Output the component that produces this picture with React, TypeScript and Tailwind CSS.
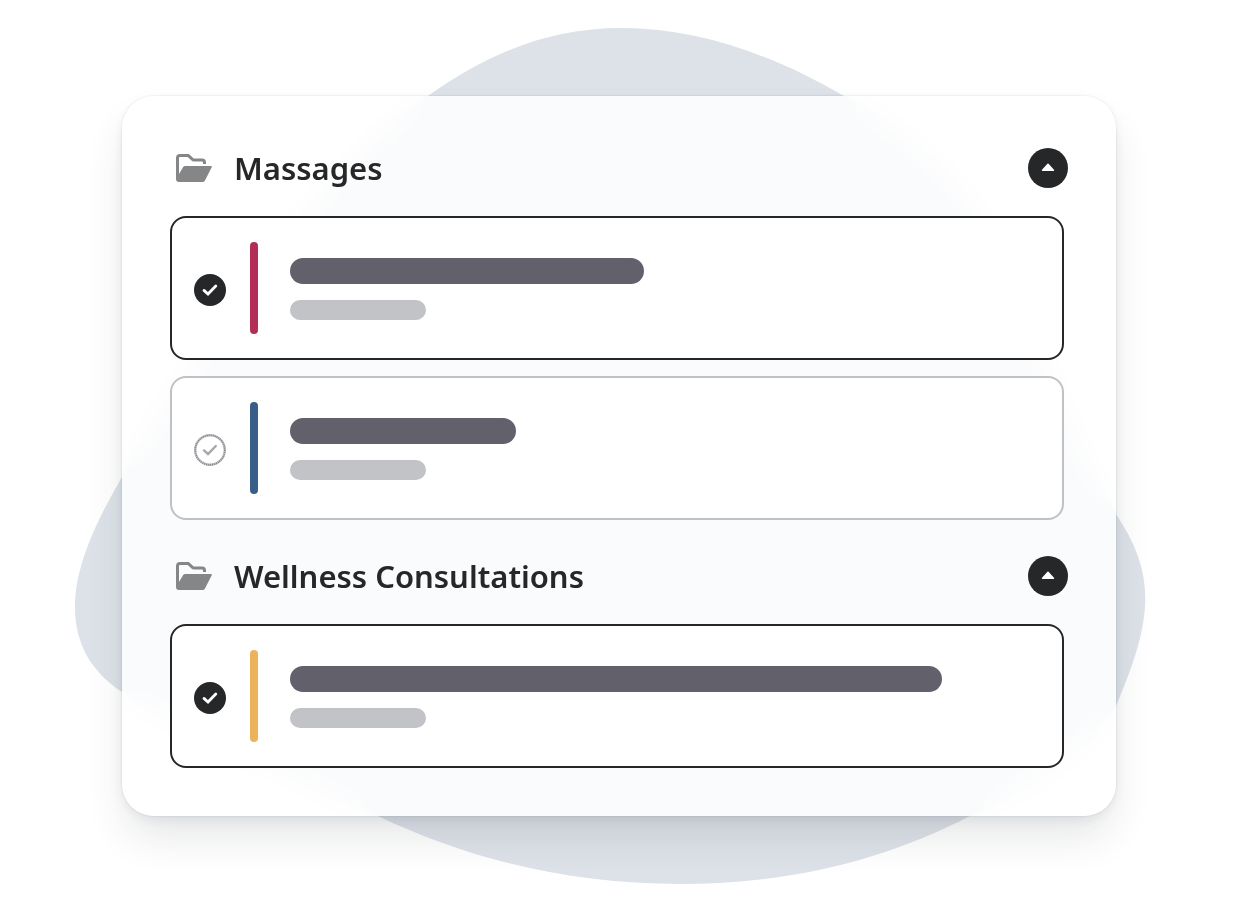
import { useState } from 'react';
import clsx from 'clsx';

interface Service {
  id: string;
  accent: string;
  titleWidth: string;
  selected: boolean;
}

interface Category {
  name: string;
  services: Service[];
}

const categories: Category[] = [
  {
    name: 'Massages',
    services: [
      { id: 'massage-1', accent: 'bg-[#b32e54]', titleWidth: 'w-[354px]', selected: true },
      { id: 'massage-2', accent: 'bg-[#385f89]', titleWidth: 'w-[226px]', selected: false },
    ],
  },
  {
    name: 'Wellness Consultations',
    services: [
      { id: 'wellness-1', accent: 'bg-[#ecb35a]', titleWidth: 'w-[652px]', selected: true },
    ],
  },
];

function Blob() {
  return (
    <svg
      className="absolute inset-0 w-full h-full"
      viewBox="0 0 1240 914"
      preserveAspectRatio="none"
      aria-hidden="true"
    >
      <path
        fill="#dde2e9"
        d="M622 28C700 28 775 56 844 96C890 123 930 155 962 192C1025 265 1045 405 1116 514C1156 574 1154 618 1116 706C1080 755 1030 786 970 816C885 860 790 884 680 884C570 884 470 860 378 816C290 775 190 735 122 692C92 672 75 645 75 607C75 565 97 520 122 477C160 412 200 350 250 285C290 232 350 150 428 96C490 52 550 28 622 28Z"
      />
    </svg>
  );
}

function FolderIcon() {
  return (
    <svg className="w-9 h-7 shrink-0" viewBox="0 0 36 28" aria-hidden="true">
      <path
        d="M1.5 25V4Q1.5 1.5 4 1.5H12.2L16.2 5.2Q17 6 18.2 6H26Q28.5 6 28.5 8.5V10"
        fill="none"
        stroke="#858688"
        strokeWidth="3"
      />
      <path
        d="M0 20H3L7.2 13Q7.9 12 9 12H35Q36.4 12 35.7 13.3L29 26.5Q28.2 28 26.6 28H3Q0 28 0 25Z"
        fill="#858688"
      />
    </svg>
  );
}

function SelectMark({ service }: { service: Service }) {
  const [checked, setChecked] = useState(service.selected);

  return (
    <label className="relative block w-8 h-8 mt-8 shrink-0 cursor-pointer">
      <input
        type="checkbox"
        aria-label="Select service"
        checked={checked}
        onChange={() => setChecked(!checked)}
        className="block appearance-none w-8 h-8 rounded-full checked:bg-[#262729] cursor-pointer"
      />
      <svg className="absolute inset-0 pointer-events-none" width="32" height="32" viewBox="0 0 32 32" aria-hidden="true">
        {!checked && (
          <>
            <circle cx="16" cy="16" r="14.8" fill="none" stroke="#c2c3c7" strokeWidth="2.4" />
            <circle cx="16" cy="16" r="14.8" fill="none" stroke="#858688" strokeWidth="1.8" strokeDasharray="1 1" />
          </>
        )}
        <path
          d="M10 16.4L14 20L21.8 12"
          fill="none"
          stroke={checked ? '#fff' : '#a6a7aa'}
          strokeWidth={checked ? 2.8 : 2.4}
          strokeLinecap="round"
        />
      </svg>
    </label>
  );
}

function ServiceRow({ service }: { service: Service }) {
  return (
    <li
      className={clsx(
        'flex items-start h-36 px-[22px] py-6 bg-white border-2 rounded-2xl',
        service.selected ? 'border-[#262729]' : 'border-[#c0c1c6]'
      )}
    >
      <SelectMark service={service} />
      <div className={clsx('w-2 h-[92px] ml-6 rounded-full shrink-0', service.accent)}></div>

      {/* Title and duration placeholders */}
      <div className="flex-1 flex flex-col gap-4 ml-8 pt-4">
        <div className={clsx('h-[26px] max-w-full rounded-full bg-[#62606a]', service.titleWidth)}></div>
        <div className="h-5 w-[136px] rounded-full bg-[#c2c3c7]"></div>
      </div>
    </li>
  );
}

function CategorySection({ category }: { category: Category }) {
  const [open, setOpen] = useState(true);

  return (
    <section>
      <div className="flex items-center h-10">
        <div className="pl-[6px]">
          <FolderIcon />
        </div>
        <h2 className="flex-1 ml-[22px] text-[31px] leading-10 font-semibold text-[#262729]">{category.name}</h2>
        <button
          type="button"
          aria-label={`Toggle ${category.name}`}
          aria-expanded={open}
          onClick={() => setOpen(!open)}
          className="w-10 h-10 rounded-full bg-[#262729] flex items-center justify-center"
        >
          <svg className={clsx(!open && 'rotate-180')} width="14" height="10" viewBox="0 0 14 10" aria-hidden="true">
            <path
              d="M1.6 7.2L7 1.4L12.4 7.2Z"
              fill="#fff"
              stroke="#fff"
              strokeWidth="1.6"
              strokeLinejoin="round"
            />
          </svg>
        </button>
      </div>

      {open && (
        <ul className="flex flex-col gap-4 mt-7 mr-1">
          {category.services.map((service) => (
            <ServiceRow key={service.id} service={service} />
          ))}
        </ul>
      )}
    </section>
  );
}

export default function App() {
  return (
    <div className="relative min-h-screen overflow-hidden bg-white pt-24 pb-[98px] pl-[122px] pr-[124px] font-['Noto_Sans',sans-serif]">
      <Blob />
      <main className="relative flex flex-col gap-9 pt-[52px] pb-12 px-12 rounded-[32px] bg-white/84 backdrop-blur-[16px] shadow-[0_0_2px_rgba(38,60,80,0.18),0_24px_40px_-4px_rgba(38,50,60,0.12),0_4px_16px_-4px_rgba(38,60,80,0.12)]">
        {categories.map((category) => (
          <CategorySection key={category.name} category={category} />
        ))}
      </main>
    </div>
  );
}
